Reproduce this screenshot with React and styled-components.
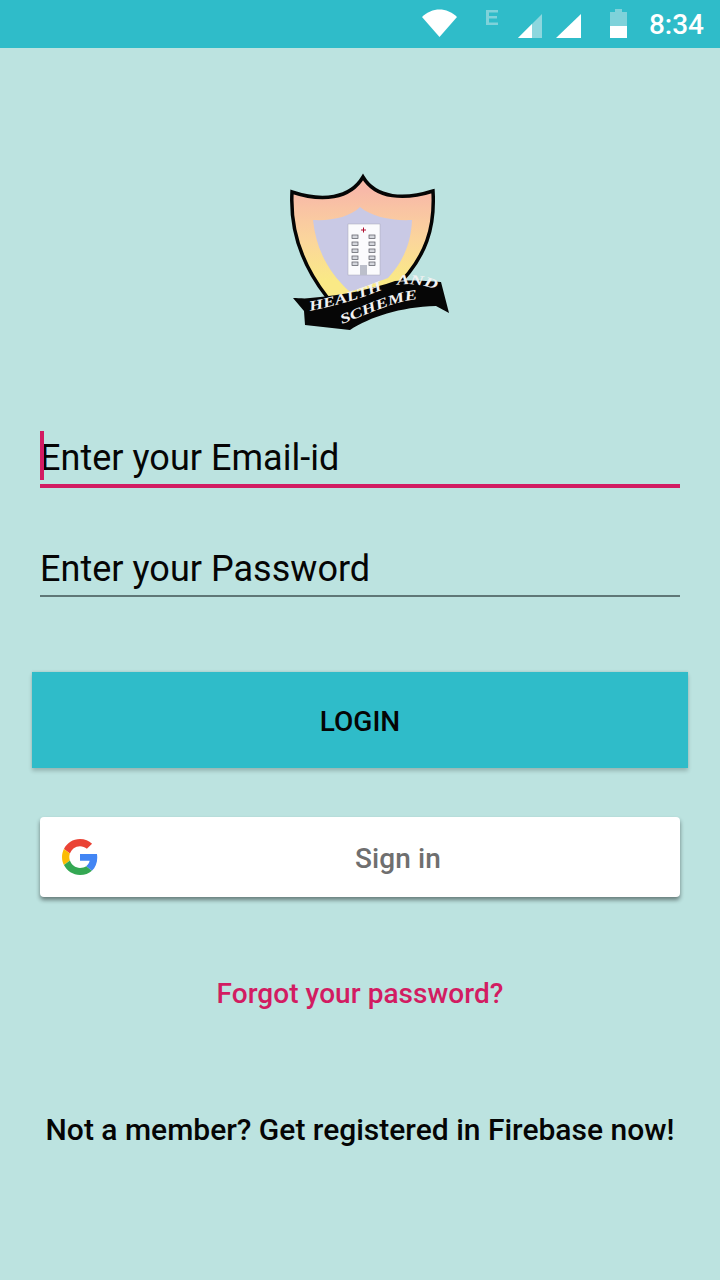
import React from 'react';
import styled, { createGlobalStyle } from 'styled-components';

const GlobalStyle = createGlobalStyle`
  html, body {
    margin: 0;
    padding: 0;
    background: #bce3e0;
    font-family: Roboto, "Liberation Sans", sans-serif;
  }
`;

const Page = styled.div`
  width: 720px;
  height: 1280px;
  overflow: hidden;
  display: flex;
  flex-direction: column;
  background: #bce3e0;
`;

const StatusBar = styled.div`
  height: 48px;
  flex: none;
  background: #2fbcc9;
  display: flex;
  align-items: flex-start;
  justify-content: flex-end;
  padding-right: 16px;
  box-sizing: border-box;
`;

const StatusIcon = styled.svg`
  display: block;
  flex: none;
  margin-top: ${props => props.$top}px;
  margin-right: ${props => props.$gap}px;
`;

const Clock = styled.span`
  color: #fff;
  font-size: 28px;
  font-weight: 500;
  line-height: 50px;
`;

const Crest = styled.svg`
  display: block;
  margin: 117px auto 0;
  flex: none;
`;

const Form = styled.div`
  display: flex;
  flex-direction: column;
  padding: 0 40px;
  margin-top: 85px;
`;

const Field = styled.div`
  position: relative;
  height: ${props => (props.$focused ? 53 : 52)}px;
  padding-top: ${props => (props.$focused ? 6 : 3)}px;
  margin-top: ${props => props.$top || 0}px;
  display: flex;
  align-items: center;
  border-bottom: ${props => (props.$focused ? '4px solid #d21c62' : '2px solid #5f7777')};
  color: #050505;
  font-size: 36px;
  letter-spacing: 0.03px;
  line-height: 54px;
`;

const Caret = styled.span`
  position: absolute;
  left: 0;
  top: 6px;
  width: 4px;
  height: 49px;
  background: #d21c62;
`;

const LoginButton = styled.div`
  height: 93px;
  padding-top: 3px;
  margin: 75px 32px 0;
  background: #2fbcc9;
  display: flex;
  align-items: center;
  justify-content: center;
  color: #050505;
  font-size: 28px;
  font-weight: 500;
  box-shadow: 0 3px 4px rgba(0, 0, 0, 0.2), 0 -1px 2px rgba(0, 0, 0, 0.08);
`;

const GoogleButton = styled.div`
  position: relative;
  height: 80px;
  margin: 49px 40px 0;
  background: #fff;
  border-radius: 4px;
  display: flex;
  align-items: center;
  justify-content: center;
  padding: 3px 0 0 76px;
  box-sizing: border-box;
  color: #6f6f6f;
  font-size: 28px;
  font-weight: 500;
  letter-spacing: 0.1px;
  box-shadow: 0 3px 4px rgba(0, 0, 0, 0.45);
`;

const GoogleMark = styled.svg`
  position: absolute;
  left: 22px;
  top: 22px;
`;

const Forgot = styled.div`
  margin-top: 79px;
  text-align: center;
  color: #d21c62;
  font-size: 28px;
  font-weight: 500;
  letter-spacing: 0.05px;
  line-height: 36px;
`;

const Register = styled.div`
  margin-top: 99px;
  text-align: center;
  color: #050505;
  font-size: 30px;
  font-weight: 500;
  line-height: 38px;
`;

function StatusIcons() {
  return (
    <>
      <StatusIcon $top={9} $gap={28} width="35" height="28" viewBox="0 0 35 28">
        <path d="M0 8 C10 -2 25 -2 35 8 L17.5 28 Z" fill="#fff" />
      </StatusIcon>
      <StatusIcon $top={10} $gap={19} width="14" height="15" viewBox="0 0 14 15">
        <path d="M1 0 H13 V2.6 H4 V6 H12 V8.6 H4 V12.4 H13 V15 H1 Z" fill="#7fd2da" />
      </StatusIcon>
      <StatusIcon $top={14} $gap={14} width="24" height="24" viewBox="0 0 24 24">
        <path d="M24 0 V24 H0 Z" fill="#8dd7de" />
        <path d="M14 10 V24 H0 Z" fill="#fff" />
      </StatusIcon>
      <StatusIcon $top={14} $gap={29} width="25" height="24" viewBox="0 0 25 24">
        <path d="M25 0 V24 H0 Z" fill="#fff" />
      </StatusIcon>
      <StatusIcon $top={9} $gap={22} width="17" height="29" viewBox="0 0 17 29">
        <path d="M5 0 H12 V3 H17 V29 H0 V3 H5 Z" fill="#7fd2da" />
        <path d="M0 17 H17 V29 H0 Z" fill="#fff" />
      </StatusIcon>
    </>
  );
}

const RIBBON_FONT = {
  fontFamily: "'Liberation Serif', serif",
  fontWeight: 700,
  fontStyle: 'italic',
  fontSize: 14,
  fill: '#f2f2f2',
};

function Logo() {
  return (
    <Crest width="200" height="175" viewBox="0 0 200 175">
      <defs>
        <linearGradient id="shieldFill" x1="0" y1="0" x2="0" y2="1">
          <stop offset="0.1" stopColor="#f8b9a8" />
          <stop offset="0.45" stopColor="#fbd59c" />
          <stop offset="0.75" stopColor="#fae986" />
        </linearGradient>
        <path id="ribbonHealth" d="M50 146 C 75 141 100 134 124 124" />
        <path id="ribbonAnd" d="M137 120 C 150 118 165 120 177 125" />
        <path id="ribbonScheme" d="M82 159 C 105 151 130 137 158 134" />
      </defs>
      <path
        d="M32 27 C 62 37 90 34 103 12 C 116 34 145 35 173 26 C 175 60 168 92 133 125 L 100 150 L 67 132 C 42 100 30 65 32 27 Z"
        fill="url(#shieldFill)"
        stroke="#050505"
        strokeWidth="3.5"
      />
      <path
        d="M53 55 C 72 56 90 52 100 42 C 112 52 132 56 152 55 C 151 82 140 100 128 113 L 90 127 C 66 105 56 82 53 55 Z"
        fill="#c9c9e5"
      />
      <rect x="88" y="59" width="32" height="51" fill="#fbfbfd" stroke="#a9a9b8" strokeWidth="0.5" />
      <path d="M101 65 H106 M103.5 62.5 V67.5" stroke="#b01030" strokeWidth="1" />
      {[70, 77, 84, 91, 97].map(y => (
        <g key={y} fill="#d6d8de" stroke="#55565f" strokeWidth="0.7">
          <rect x="92" y={y} width="6" height="3.5" />
          <rect x="109" y={y} width="6" height="3.5" />
        </g>
      ))}
      <rect x="100" y="100" width="7" height="10" fill="#bcbfcb" />
      <path
        d="M33 133 C 38 133 45 134 50 133 C 85 130 112 124 135 116 C 150 115 168 116 181 117 L 189 148 L 176 141 C 140 142 110 152 90 165 C 75 163 60 162 45 160 L 44 146 Z"
        fill="#060606"
      />
      <text {...RIBBON_FONT}>
        <textPath href="#ribbonHealth" textLength="76" lengthAdjust="spacingAndGlyphs">HEALTH</textPath>
      </text>
      <text {...RIBBON_FONT}>
        <textPath href="#ribbonAnd" textLength="40" lengthAdjust="spacingAndGlyphs">AND</textPath>
      </text>
      <text {...RIBBON_FONT}>
        <textPath href="#ribbonScheme" textLength="80" lengthAdjust="spacingAndGlyphs">SCHEME</textPath>
      </text>
    </Crest>
  );
}

export default function App() {
  return (
    <Page>
      <GlobalStyle />
      <StatusBar>
        <StatusIcons />
        <Clock>8:34</Clock>
      </StatusBar>
      <Logo />
      <Form>
        <Field $focused>
          <Caret />
          Enter your Email-id
        </Field>
        <Field $top={52}>Enter your Password</Field>
      </Form>
      <LoginButton>LOGIN</LoginButton>
      <GoogleButton>
        <GoogleMark width="36" height="36" viewBox="0 0 48 48">
          <path fill="#ea4335" d="M24 9.5c3.5 0 6.7 1.2 9.2 3.6l6.9-6.9C35.9 2.4 30.5 0 24 0 14.6 0 6.5 5.4 2.6 13.2l8 6.2C12.5 13.7 17.8 9.5 24 9.5z" />
          <path fill="#4285f4" d="M47 24.5c0-1.6-.1-3.1-.4-4.5H24v9h12.9c-.6 3-2.2 5.5-4.7 7.2l7.7 6c4.5-4.2 7.1-10.3 7.1-17.7z" />
          <path fill="#fbbc05" d="M10.5 28.6c-.5-1.4-.8-3-.8-4.6s.3-3.2.8-4.6l-8-6.2C.9 16.5 0 20.1 0 24s.9 7.5 2.6 10.8l7.9-6.2z" />
          <path fill="#34a853" d="M24 48c6.5 0 11.9-2.1 15.9-5.8l-7.7-6c-2.1 1.4-4.9 2.3-8.2 2.3-6.2 0-11.5-4.2-13.4-9.9l-8 6.2C6.5 42.6 14.6 48 24 48z" />
        </GoogleMark>
        Sign in
      </GoogleButton>
      <Forgot>Forgot your password?</Forgot>
      <Register>Not a member? Get registered in Firebase now!</Register>
    </Page>
  );
}
